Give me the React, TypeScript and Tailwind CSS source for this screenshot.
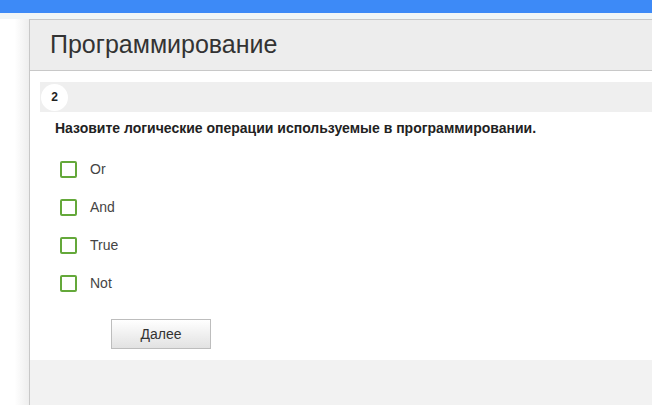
export default function App() {
  const options = ["Or", "And", "True", "Not"]

  return (
    <div className="w-[652px] h-[405px] overflow-hidden bg-white flex flex-col font-['Liberation_Sans',Arial,sans-serif] text-[#333]">
      {/* Top bar */}
      <div className="h-[13px] bg-[#3d8af7] shrink-0" />
      <div className="h-[6px] bg-[#f1f6f7] shrink-0" />

      <div className="flex flex-1 min-h-0">
        {/* Left gutter */}
        <div className="w-[29px] shrink-0 bg-gradient-to-r from-white from-50% to-[#eeeeee]" />

        {/* Card */}
        <div className="flex-1 flex flex-col border-l border-t border-[#c8c8c8]">
          <div className="h-[51px] shrink-0 bg-[#ededed] border-b border-[#c8c8c8] flex items-center px-[20px]">
            <h1 className="text-[25px] leading-none text-[#333] pb-[1px]">Программирование</h1>
          </div>

          <div className="bg-white pt-[11px] pb-[11px]">
            {/* Question number */}
            <div className="ml-[10px] h-[30px] bg-[#efefef] flex items-center pl-[1px]">
              <div className="w-[27px] h-[27px] rounded-full bg-white flex items-center justify-center text-[12px] font-bold text-[#222]">
                2
              </div>
            </div>

            <p className="mt-[8px] ml-[25px] text-[14px] font-bold leading-[16px] text-[#222]">
              Назовите логические операции используемые в программировании.
            </p>

            <div className="mt-[25px] ml-[30px] flex flex-col gap-[22px]">
              {options.map((o) => (
                <label key={o} className="flex items-center h-[16px] cursor-pointer">
                  <span className="w-[17px] h-[17px] border-2 border-[#64a83a] rounded-[2px] bg-white" />
                  <span className="ml-[13px] text-[14px] text-[#444]">{o}</span>
                </label>
              ))}
            </div>

            <div className="mt-[28px] ml-[81px]">
              <button className="w-[100px] h-[30px] border border-[#bdbdbd] bg-gradient-to-b from-white to-[#e2e2e2] text-[14px] text-[#333]">
                Далее
              </button>
            </div>
          </div>

          <div className="flex-1 bg-[#f2f2f2]" />
        </div>
      </div>
    </div>
  )
}
